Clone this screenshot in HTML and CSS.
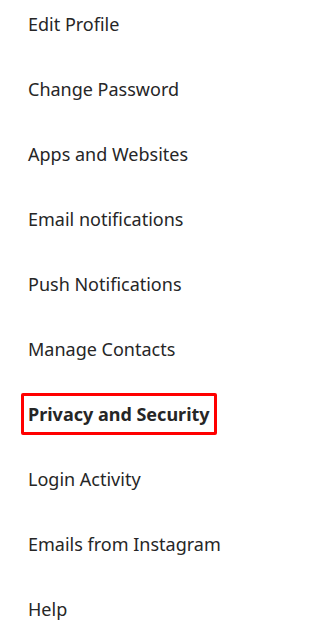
FILE: index.html
```html
<!DOCTYPE html>
<html>
<head>
<meta charset="utf-8">
<link rel="stylesheet" href="styles.css">
</head>
<body>
<ul class="menu">
  <li class="item">Edit Profile</li>
  <li class="item">Change Password</li>
  <li class="item">Apps and Websites</li>
  <li class="item">Email notifications</li>
  <li class="item">Push Notifications</li>
  <li class="item">Manage Contacts</li>
  <li class="item active">Privacy and Security</li>
  <li class="item">Login Activity</li>
  <li class="item">Emails from Instagram</li>
  <li class="item">Help</li>
</ul>
</body>
</html>
```
FILE: styles.css
```css
html, body {
  margin: 0;
  padding: 0;
  background: #ffffff;
}
body {
  font-family: "Noto Sans", "Open Sans", sans-serif;
  color: #262626;
}
.menu {
  list-style: none;
  margin: 0;
  padding: 12px 0 0 28px;
  display: flex;
  flex-direction: column;
  gap: 41px;
  align-items: flex-start;
}
.item {
  font-size: 18px;
  line-height: 24px;
  height: 24px;
  white-space: nowrap;
}
.active {
  font-weight: 700;
  border: 3px solid #ff0000;
  border-radius: 2px;
  padding: 6px 4px;
  margin: -9px 0 -9px -7px;
}
```
